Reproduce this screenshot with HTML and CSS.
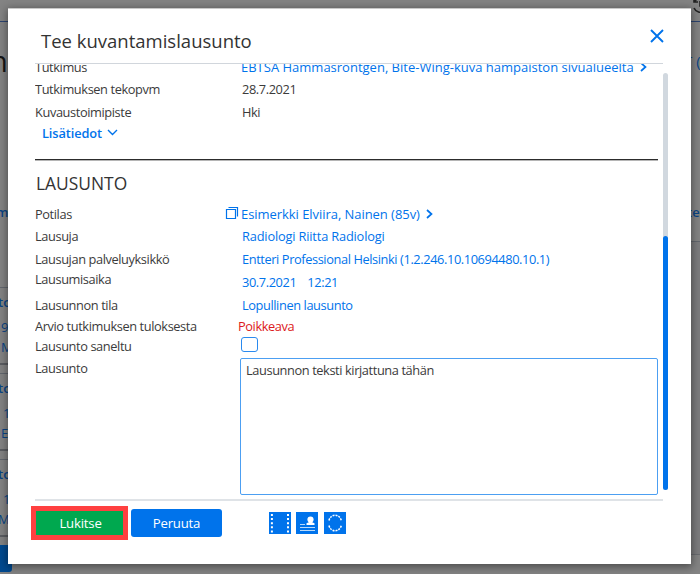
FILE: index.html
```html
<!DOCTYPE html>
<html lang="fi">
<head>
<meta charset="utf-8">
<title>Tee kuvantamislausunto</title>
<link rel="stylesheet" href="styles.css">
</head>
<body>
<div class="backdrop">
  <header class="page-top">
    <svg class="history" width="18" height="18" viewBox="0 0 18 18" fill="none" stroke="#222" stroke-width="1.6"><path d="M2 1v4h4M2.300 5A7 7 0 1 1 2 11M8 4v5h5"/></svg>
  </header>
  <div class="page-body">
    <div class="edge-left">
      <div class="page-title">n</div>
      <div class="tab">m</div>
      <div class="card"><b>to</b><span>9</span><span>M</span></div>
      <div class="card"><b>to</b><span class="in">1</span><span>E</span></div>
      <div class="card"><b>to</b><span class="in">1</span><span class="out">Ma</span></div>
      <div class="page-button"></div>
    </div>
    <div class="edge-right">
      <div class="page-link">T (</div>
      <div class="tab">tel</div>
      <div class="panel"></div>
    </div>
  </div>
</div>

<main class="modal">
  <header class="modal-head">
    <h1>Tee kuvantamislausunto</h1>
    <svg class="close" width="14" height="14" viewBox="0 0 14 14"><path d="M1 1l12 12M13 1L1 13" stroke="#0073eb" stroke-width="1.9"/></svg>
  </header>
  <div class="modal-body">
    <div class="content">
      <div class="row r-study"><span class="label">Tutkimus</span><span class="value link wide">EBTSA Hammasröntgen, Bite-Wing-kuva hampaiston sivualueelta</span><svg class="chev" width="7" height="10" viewBox="0 0 7 10"><path d="M1 1l4.500 4-4.500 4"/></svg></div>
      <div class="row r-date"><span class="label">Tutkimuksen tekopvm</span><span class="value">28.7.2021</span></div>
      <div class="row r-unit"><span class="label">Kuvaustoimipiste</span><span class="value">Hki</span></div>
      <div class="more link"><span>Lisätiedot</span><svg class="chev" width="11" height="7" viewBox="0 0 11 7"><path d="M1 1l4.500 4.500L10 1"/></svg></div>
      <h2>LAUSUNTO</h2>
      <div class="row r-patient"><span class="label">Potilas</span><svg class="copy" width="14" height="14" viewBox="0 0 14 14"><path d="M1.500 3.500h9v9h-9zM3.500 1.500h9v9"/></svg><span class="value link wide">Esimerkki Elviira, Nainen (85v)</span><svg class="chev" width="7" height="10" viewBox="0 0 7 10"><path d="M1 1l4.500 4-4.500 4"/></svg></div>
      <div class="row r-author"><span class="label">Lausuja</span><span class="value link">Radiologi Riitta Radiologi</span></div>
      <div class="row r-service"><span class="label">Lausujan palveluyksikkö</span><span class="value link">Entteri Professional Helsinki (1.2.246.10.10694480.10.1)</span></div>
      <div class="row r-time"><span class="label">Lausumisaika</span><span class="value link">30.7.2021</span><span class="value link clock">12:21</span></div>
      <div class="row r-state"><span class="label">Lausunnon tila</span><span class="value link">Lopullinen lausunto</span></div>
      <div class="row r-result"><span class="label">Arvio tutkimuksen tuloksesta</span><span class="value alert">Poikkeava</span></div>
      <div class="row r-dictated"><span class="label">Lausunto saneltu</span><span class="checkbox"></span></div>
      <div class="row r-text"><span class="label">Lausunto</span><div class="textbox">Lausunnon teksti kirjattuna tähän</div></div>
    </div>
    <div class="scroll"><div class="thumb"></div></div>
  </div>
  <footer class="modal-foot">
    <div class="highlight"><button class="lock">Lukitse</button></div>
    <button class="cancel">Peruuta</button>
    <div class="tools">
      <svg width="22" height="22" viewBox="0 0 22 22"><rect width="22" height="22" fill="#0073eb"/><path d="M2.900 2v19M19 2v19" stroke="#fff" stroke-width="2" stroke-dasharray="2 2.100"/></svg>
      <svg width="22" height="22" viewBox="0 0 22 22"><rect width="22" height="22" fill="#0073eb"/><path d="M10.500 13v-1.800l2.800-1.200V8h2.400v2l2.800 1.200V13z" fill="#fff"/><circle cx="14.500" cy="7.500" r="3.100" fill="#fff"/><path d="M4 12.500h5" stroke="#b9dafa"/><path d="M4 15.500h15M4 18.500h15" stroke="#b9dafa" stroke-width="1.200"/></svg>
      <svg width="22" height="22" viewBox="0 0 22 22"><rect width="22" height="22" fill="#0073eb"/><path d="M5 8.500C6.500 1.500 15.500 1.500 17.300 8.500M5 13.500C6.500 20.500 15.500 20.500 17.300 13.500" fill="none" stroke="#fff" stroke-width="1.500" stroke-dasharray="2 1"/></svg>
    </div>
  </footer>
</main>
</body>
</html>
```
FILE: styles.css
```css
* { box-sizing: border-box; }
body {
  margin: 0;
  width: 700px;
  height: 574px;
  overflow: hidden;
  position: relative;
  font-family: "Open Sans", "Noto Sans", sans-serif;
  font-size: 12.8px;
  letter-spacing: -.4px;
  line-height: 18px;
  color: #3b3b3b;
}

/* Page behind the dialog */
.backdrop { width: 700px; height: 574px; overflow: hidden; background: #838383; color: #0a4384; letter-spacing: 0; }
.page-top { height: 22px; border-bottom: 1px solid #2d4470; display: flex; justify-content: flex-end; }
.history { margin: -3px -10px 0 0; }
.page-body { display: flex; justify-content: space-between; }
.edge-left { width: 12px; height: 552px; white-space: nowrap; }
.edge-right { width: 9px; height: 552px; white-space: nowrap; }
.page-title { height: 176px; padding-top: 22px; margin-left: -10px; font-size: 29px; line-height: 34px; color: #151515; }
.page-link { height: 176px; padding-top: 30px; margin-left: -7px; font-size: 15px; }
.tab { height: 43px; font-weight: 600; font-size: 13px; line-height: 28px; margin-left: -4px; }
.card {
  height: 78px;
  margin-bottom: 8px;
  padding-top: 5px;
  border-top: 1px solid #62666d;
  border-bottom: 2px solid #5b5d61;
}
.tab + .card { margin-top: 46px; }
.card b, .card span { display: block; height: 20px; font-size: 13px; line-height: 18px; margin-left: 1px; }
.card b { height: 25px; font-weight: 600; margin-left: -2px; }
.card .in { margin-left: 3px; }
.card .out { margin-left: -2px; }
.page-button { height: 27px; background: #00498f; border-radius: 0 3px 3px 0; }
.panel { height: 314px; border-top: 1px solid #62666d; border-bottom: 1px solid #696b6f; background: #7b7b7d; }

/* Dialog */
.modal {
  position: absolute;
  left: 8px;
  top: 8px;
  width: 683px;
  height: 556px;
  background: #fff;
  border-top: 1px solid #c8c8c8;
  box-shadow: 0 2px 8px 1px rgba(0, 0, 0, .42);
}
.modal-head {
  height: 55px;
  margin: 0 28px 0 27px;
  padding: 14px 0 0 6px;
  border-bottom: 1px solid #d1d6dc;
  display: flex;
  justify-content: space-between;
  letter-spacing: 0;
}
h1, h2 { font-weight: 400; margin: 0; color: #333; }
h1 { font-size: 18.5px; line-height: 36px; }
.close { margin: 6px -1px 0 0; }
.modal-body { height: 435px; display: flex; }
.content { width: 623px; margin-left: 27px; height: 435px; overflow: hidden; }
.row { display: flex; align-items: center; white-space: nowrap; }
.label { width: 207px; flex: none; }
.link { color: #0073eb; }
.wide { font-size: 13px; letter-spacing: 0; }
.chev { fill: none; stroke: #0073eb; stroke-width: 1.700; flex: none; margin-left: 6px; }
.r-study { height: 22px; margin-top: -8px; }
.r-study .label { width: 206px; }
.r-date { height: 21px; }
.r-unit { height: 25px; }
.more { height: 20px; margin: -1px 0 16px 7px; display: flex; align-items: center; font-weight: 600; letter-spacing: -.1px; }
.more .chev { margin-left: 5px; margin-bottom: 2px; stroke-width: 1.400; }
h2 { height: 44px; border-top: 1px solid #2c2c2c; box-shadow: inset 0 1px #b5b5b5; font-size: 17.4px; line-height: 46px; letter-spacing: 0; padding-left: 1px; }
.r-patient { height: 21px; }
.r-patient .label { width: 190px; }
.r-patient .wide { letter-spacing: -.05px; }
.copy { fill: none; stroke: #0073eb; stroke-width: 1.200; margin: 0 2px 1px 0; }
.r-author { height: 23px; }
.r-author .value { letter-spacing: -.17px; }
.r-service { height: 23px; }
.r-time { height: 24px; }
.r-time .label { margin-top: -6px; }
.clock { margin-left: 11px; }
.r-state { height: 22px; }
.r-result { height: 19px; }
.r-result .label { width: 203px; }
.alert { color: #dc1920; }
.r-dictated { height: 22px; }
.r-dictated .label { width: 206px; margin-top: -1px; }
.checkbox { width: 17px; height: 15px; border: 1px solid #2a8aef; border-radius: 3px; margin-bottom: 4px; }
.r-text { align-items: flex-start; margin-top: 1px; }
.r-text .label { width: 205px; padding-top: 1px; }
.textbox { width: 418px; height: 137px; border: 1px solid #4c9ff2; border-radius: 2px; padding: 2px 5px; }
.scroll { width: 5px; height: 417px; margin: 9px 0 0 5px; background: #d1d8df; border-radius: 3px; display: flex; align-items: flex-end; }
.thumb { width: 5px; height: 254px; background: #0073eb; border-radius: 3px; }
.modal-foot {
  margin: 0 28px 0 27px;
  border-top: 2px solid #dfe3e7;
  display: flex;
  align-items: flex-start;
}
button { border: 0; padding: 0; color: #fff; font: inherit; font-size: 13.2px; letter-spacing: -.2px; }
.highlight { width: 97px; height: 34px; margin: 5px 0 0 -4px; border: 5px solid #ff4040; display: flex; }
.lock { width: 87px; height: 24px; background: #00a84f; padding-left: 2px; }
.cancel { width: 91px; height: 28px; margin: 8px 0 0 3px; background: #0073eb; border-radius: 3px; }
.tools { display: flex; gap: 5.4px; margin: 11px 0 0 47px; }
```
